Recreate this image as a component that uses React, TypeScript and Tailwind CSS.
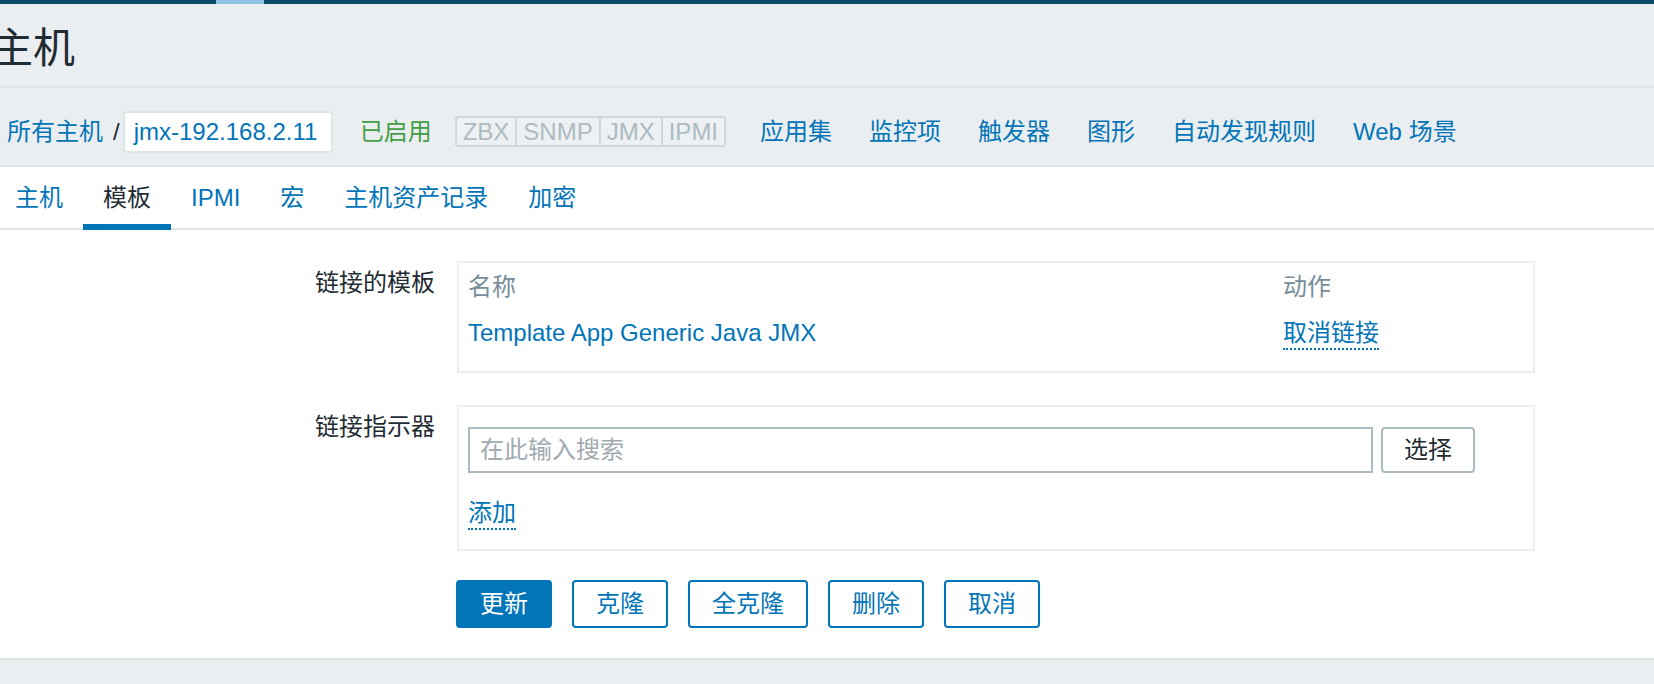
import React from 'react';

const navLinks = ['应用集', '监控项', '触发器', '图形', '自动发现规则', 'Web 场景'];
const tabs = ['主机', '模板', 'IPMI', '宏', '主机资产记录', '加密'];
const interfaces = ['ZBX', 'SNMP', 'JMX', 'IPMI'];

const App: React.FC = () => {
  return (
    <div className="w-[1654px] h-[684px] overflow-hidden bg-[#ebeef0] text-[#1f2c33] text-[24px] font-['Liberation_Sans','Noto_Sans_CJK_SC',sans-serif]">
      {/* top menu strip */}
      <div className="h-[4px] bg-[#0e4a6b] flex">
        <div className="ml-[216px] w-[48px] bg-[#8fc1e6]" />
      </div>

      {/* page title */}
      <header className="h-[84px] border-b-2 border-[#dfe4e7] flex items-center pt-[8px]">
        <h1 className="-ml-[9px] text-[42px] leading-none font-normal">主机</h1>
      </header>

      {/* host breadcrumbs */}
      <nav className="h-[79px] border-b-2 border-[#dfe4e7] flex items-center pt-[10px] pl-[7px] leading-none">
        <a className="text-[#0275b8]">所有主机</a>
        <span className="ml-[10px]">/</span>
        <div className="ml-[3px] w-[210px] h-[42px] bg-white border-2 border-[#dfe4e7] rounded-[4px] flex items-center pl-[9px]">
          <a className="text-[#0275b8]">jmx-192.168.2.11</a>
        </div>
        <span className="ml-[27px] text-[#429e47]">已启用</span>
        <div className="ml-[23px] h-[31px] flex border-2 border-[#cfd8dc] rounded-[3px] bg-[#eef1f3] text-[#acbbc2]">
          {interfaces.map((item, i) => (
            <span
              key={item}
              className={`px-[6px] flex items-center ${i > 0 ? 'border-l-2 border-[#cfd8dc]' : ''}`}
            >
              {item}
            </span>
          ))}
        </div>
        <div className="ml-[34px] flex gap-[37px]">
          {navLinks.map((link) => (
            <a key={link} className="text-[#0275b8]">
              {link}
            </a>
          ))}
        </div>
      </nav>

      <div className="bg-white pb-[30px]">
        {/* tabs */}
        <div className="h-[63px] border-b-2 border-[#dfe4e7] flex -ml-[5px]">
          {tabs.map((tab) => {
            const active = tab === '模板';
            return (
              <div key={tab} className="relative h-[61px] px-[20px] flex items-center leading-none">
                <span className={active ? 'text-[#1f2c33]' : 'text-[#0275b8]'}>{tab}</span>
                {active && <span className="absolute left-0 right-0 -bottom-[2px] h-[6px] bg-[#0275b8]" />}
              </div>
            );
          })}
        </div>

        {/* form */}
        <div className="pt-[31px]">
          <div className="flex">
            <div className="w-[435px] text-right pt-[10px] leading-[24px]">链接的模板</div>
            <div className="ml-[22px] w-[1078px] h-[112px] border-2 border-[#ebeef0] px-[9px] pt-[1px] leading-[24px]">
              <div className="h-[46px] pt-[11px] grid grid-cols-[815px_1fr] text-[#768d99]">
                <span>名称</span>
                <span>动作</span>
              </div>
              <div className="h-[46px] pt-[11px] grid grid-cols-[815px_1fr] items-start">
                <a className="text-[#0275b8]">Template App Generic Java JMX</a>
                <a className="justify-self-start text-[#0275b8] pb-[3px] border-b-2 border-dotted border-[#0275b8]">
                  取消链接
                </a>
              </div>
            </div>
          </div>

          <div className="flex mt-[32px]">
            <div className="w-[435px] text-right pt-[10px] leading-[24px]">链接指示器</div>
            <div className="ml-[22px] w-[1078px] h-[146px] border-2 border-[#ebeef0] px-[9px] pt-[20px] leading-[24px]">
              <div className="flex">
                <input
                  className="w-[905px] h-[46px] border-2 border-[#acbbc2] px-[10px] outline-none placeholder:text-[#9faab1]"
                  placeholder="在此输入搜索"
                />
                <button className="ml-[8px] w-[94px] h-[46px] border-2 border-[#acbbc2] rounded-[4px] bg-white text-[#1f2c33]">
                  选择
                </button>
              </div>
              <div className="mt-[28px]">
                <a className="inline-block text-[#0275b8] pb-[3px] border-b-2 border-dotted border-[#0275b8]">添加</a>
              </div>
            </div>
          </div>

          <div className="mt-[29px] ml-[456px] flex gap-[20px]">
            <button className="h-[48px] px-[22px] rounded-[4px] border-2 border-[#0275b8] bg-[#0275b8] text-white">
              更新
            </button>
            {['克隆', '全克隆', '删除', '取消'].map((label) => (
              <button
                key={label}
                className="h-[48px] px-[22px] rounded-[4px] border-2 border-[#0275b8] bg-white text-[#0275b8]"
              >
                {label}
              </button>
            ))}
          </div>
        </div>
      </div>

      <footer className="border-t-2 border-[#dfe4e7] h-[40px]" />
    </div>
  );
};

export default App;
